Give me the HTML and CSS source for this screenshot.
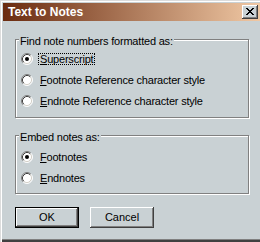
FILE: index.html
```html
<!DOCTYPE html>
<html>
<head>
<meta charset="utf-8">
<link rel="stylesheet" href="styles.css">
</head>
<body>
<div class="window">
  <div class="titlebar">
    <span class="title">Text to Notes</span>
    <span class="close"><svg width="8" height="7" viewBox="0 0 8 7"><path d="M0 0h2v1H0zM6 0h2v1H6zM1 1h2v1H1zM5 1h2v1H5zM2 2h4v1H2zM3 3h2v1H3zM2 4h4v1H2zM1 5h2v1H1zM5 5h2v1H5zM0 6h2v1H0zM6 6h2v1H6z" fill="#000"/></svg></span>
  </div>
  <div class="body">
    <div class="group group-find">
      <div class="group-title">Find note numbers formatted as:</div>
      <div class="radio-row">
        <svg class="radio" width="12" height="12" viewBox="0 0 12 12"><circle cx="6" cy="6" r="5" fill="#fff"/><path d="M2.11 9.89A5.5 5.5 0 0 1 9.89 2.11" fill="none" stroke="#808080"/><path d="M9.89 2.11A5.5 5.5 0 0 1 2.11 9.89" fill="none" stroke="#fff"/><path d="M2.82 9.18A4.5 4.5 0 0 1 9.18 2.82" fill="none" stroke="#404040"/><path d="M9.18 2.82A4.5 4.5 0 0 1 2.82 9.18" fill="none" stroke="#d4d0c8"/><circle cx="6" cy="6" r="2" fill="#000"/></svg>
        <span class="label focus"><u>S</u>uperscript</span>
      </div>
      <div class="radio-row">
        <svg class="radio" width="12" height="12" viewBox="0 0 12 12"><circle cx="6" cy="6" r="5" fill="#fff"/><path d="M2.11 9.89A5.5 5.5 0 0 1 9.89 2.11" fill="none" stroke="#808080"/><path d="M9.89 2.11A5.5 5.5 0 0 1 2.11 9.89" fill="none" stroke="#fff"/><path d="M2.82 9.18A4.5 4.5 0 0 1 9.18 2.82" fill="none" stroke="#404040"/><path d="M9.18 2.82A4.5 4.5 0 0 1 2.82 9.18" fill="none" stroke="#d4d0c8"/></svg>
        <span class="label"><u>F</u>ootnote Reference character style</span>
      </div>
      <div class="radio-row">
        <svg class="radio" width="12" height="12" viewBox="0 0 12 12"><circle cx="6" cy="6" r="5" fill="#fff"/><path d="M2.11 9.89A5.5 5.5 0 0 1 9.89 2.11" fill="none" stroke="#808080"/><path d="M9.89 2.11A5.5 5.5 0 0 1 2.11 9.89" fill="none" stroke="#fff"/><path d="M2.82 9.18A4.5 4.5 0 0 1 9.18 2.82" fill="none" stroke="#404040"/><path d="M9.18 2.82A4.5 4.5 0 0 1 2.82 9.18" fill="none" stroke="#d4d0c8"/></svg>
        <span class="label"><u>E</u>ndnote Reference character style</span>
      </div>
    </div>
    <div class="group group-embed">
      <div class="group-title">Embed notes as:</div>
      <div class="radio-row">
        <svg class="radio" width="12" height="12" viewBox="0 0 12 12"><circle cx="6" cy="6" r="5" fill="#fff"/><path d="M2.11 9.89A5.5 5.5 0 0 1 9.89 2.11" fill="none" stroke="#808080"/><path d="M9.89 2.11A5.5 5.5 0 0 1 2.11 9.89" fill="none" stroke="#fff"/><path d="M2.82 9.18A4.5 4.5 0 0 1 9.18 2.82" fill="none" stroke="#404040"/><path d="M9.18 2.82A4.5 4.5 0 0 1 2.82 9.18" fill="none" stroke="#d4d0c8"/><circle cx="6" cy="6" r="2" fill="#000"/></svg>
        <span class="label"><u>F</u>ootnotes</span>
      </div>
      <div class="radio-row">
        <svg class="radio" width="12" height="12" viewBox="0 0 12 12"><circle cx="6" cy="6" r="5" fill="#fff"/><path d="M2.11 9.89A5.5 5.5 0 0 1 9.89 2.11" fill="none" stroke="#808080"/><path d="M9.89 2.11A5.5 5.5 0 0 1 2.11 9.89" fill="none" stroke="#fff"/><path d="M2.82 9.18A4.5 4.5 0 0 1 9.18 2.82" fill="none" stroke="#404040"/><path d="M9.18 2.82A4.5 4.5 0 0 1 2.82 9.18" fill="none" stroke="#d4d0c8"/></svg>
        <span class="label"><u>E</u>ndnotes</span>
      </div>
    </div>
    <div class="buttons">
      <span class="btn btn-default">OK</span>
      <span class="btn">Cancel</span>
    </div>
  </div>
</div>
</body>
</html>
```
FILE: styles.css
```css
body {
  margin: 0;
}

.window {
  width: 260px;
  height: 242px;
  box-sizing: border-box;
  padding-top: 3px;
  overflow: hidden;
  background: #c9d1d4;
  font-family: "Liberation Sans", Arial, sans-serif;
  font-size: 11px;
  color: #000;
  box-shadow: inset 1px 1px #dcdcdc, inset 2px 2px #fff, inset 0 -2px #404040, inset 0 -3px #808080;
}

.titlebar {
  display: flex;
  align-items: center;
  justify-content: space-between;
  height: 18px;
  margin-left: 3px;
  padding: 0 2px 0 5px;
  background: linear-gradient(to right, #6a2b10, #f0c8a4);
}

.title {
  color: #fff;
  font-weight: bold;
  font-size: 12px;
  line-height: 18px;
}

.close {
  width: 16px;
  height: 14px;
  box-sizing: border-box;
  padding-top: 3px;
  display: flex;
  justify-content: center;
  align-items: flex-start;
  background: #c9d1d4;
  box-shadow: inset -1px -1px #404040, inset 1px 1px #fff, inset -2px -2px #808080;
}

.close svg {
  display: block;
}

.body {
  padding-left: 15px;
}

.group {
  width: 234px;
  box-sizing: border-box;
  border: 1px solid #808080;
  box-shadow: inset 1px 1px #fff, 1px 1px #fff;
}

.group-find {
  margin-top: 18px;
  padding-bottom: 6px;
}

.group-embed {
  margin-top: 17px;
  padding-bottom: 5px;
}

.group-title {
  display: table;
  margin: -5px 0 0 3px;
  padding: 0 1px;
  line-height: 13px;
  letter-spacing: -0.2px;
  background: #c9d1d4;
}

.group-embed .group-title {
  margin-bottom: 2px;
}

.radio-row {
  display: flex;
  align-items: flex-start;
  height: 21px;
  box-sizing: border-box;
  padding: 5px 0 0 5px;
}

.radio {
  display: block;
  flex: none;
}

.label {
  margin-left: 5px;
  padding: 0 1px;
  border: 1px dotted transparent;
  line-height: 10px;
  letter-spacing: -0.2px;
  white-space: nowrap;
}

.label.focus {
  border-color: #000;
}

.buttons {
  display: flex;
  gap: 11px;
  margin-top: 13px;
}

.btn {
  width: 64px;
  height: 21px;
  box-sizing: border-box;
  display: flex;
  align-items: center;
  justify-content: center;
  line-height: 13px;
  background: #c9d1d4;
  box-shadow: inset -1px -1px #404040, inset 1px 1px #fff, inset -2px -2px #808080;
}

.btn-default {
  border: 1px solid #000;
}
```
